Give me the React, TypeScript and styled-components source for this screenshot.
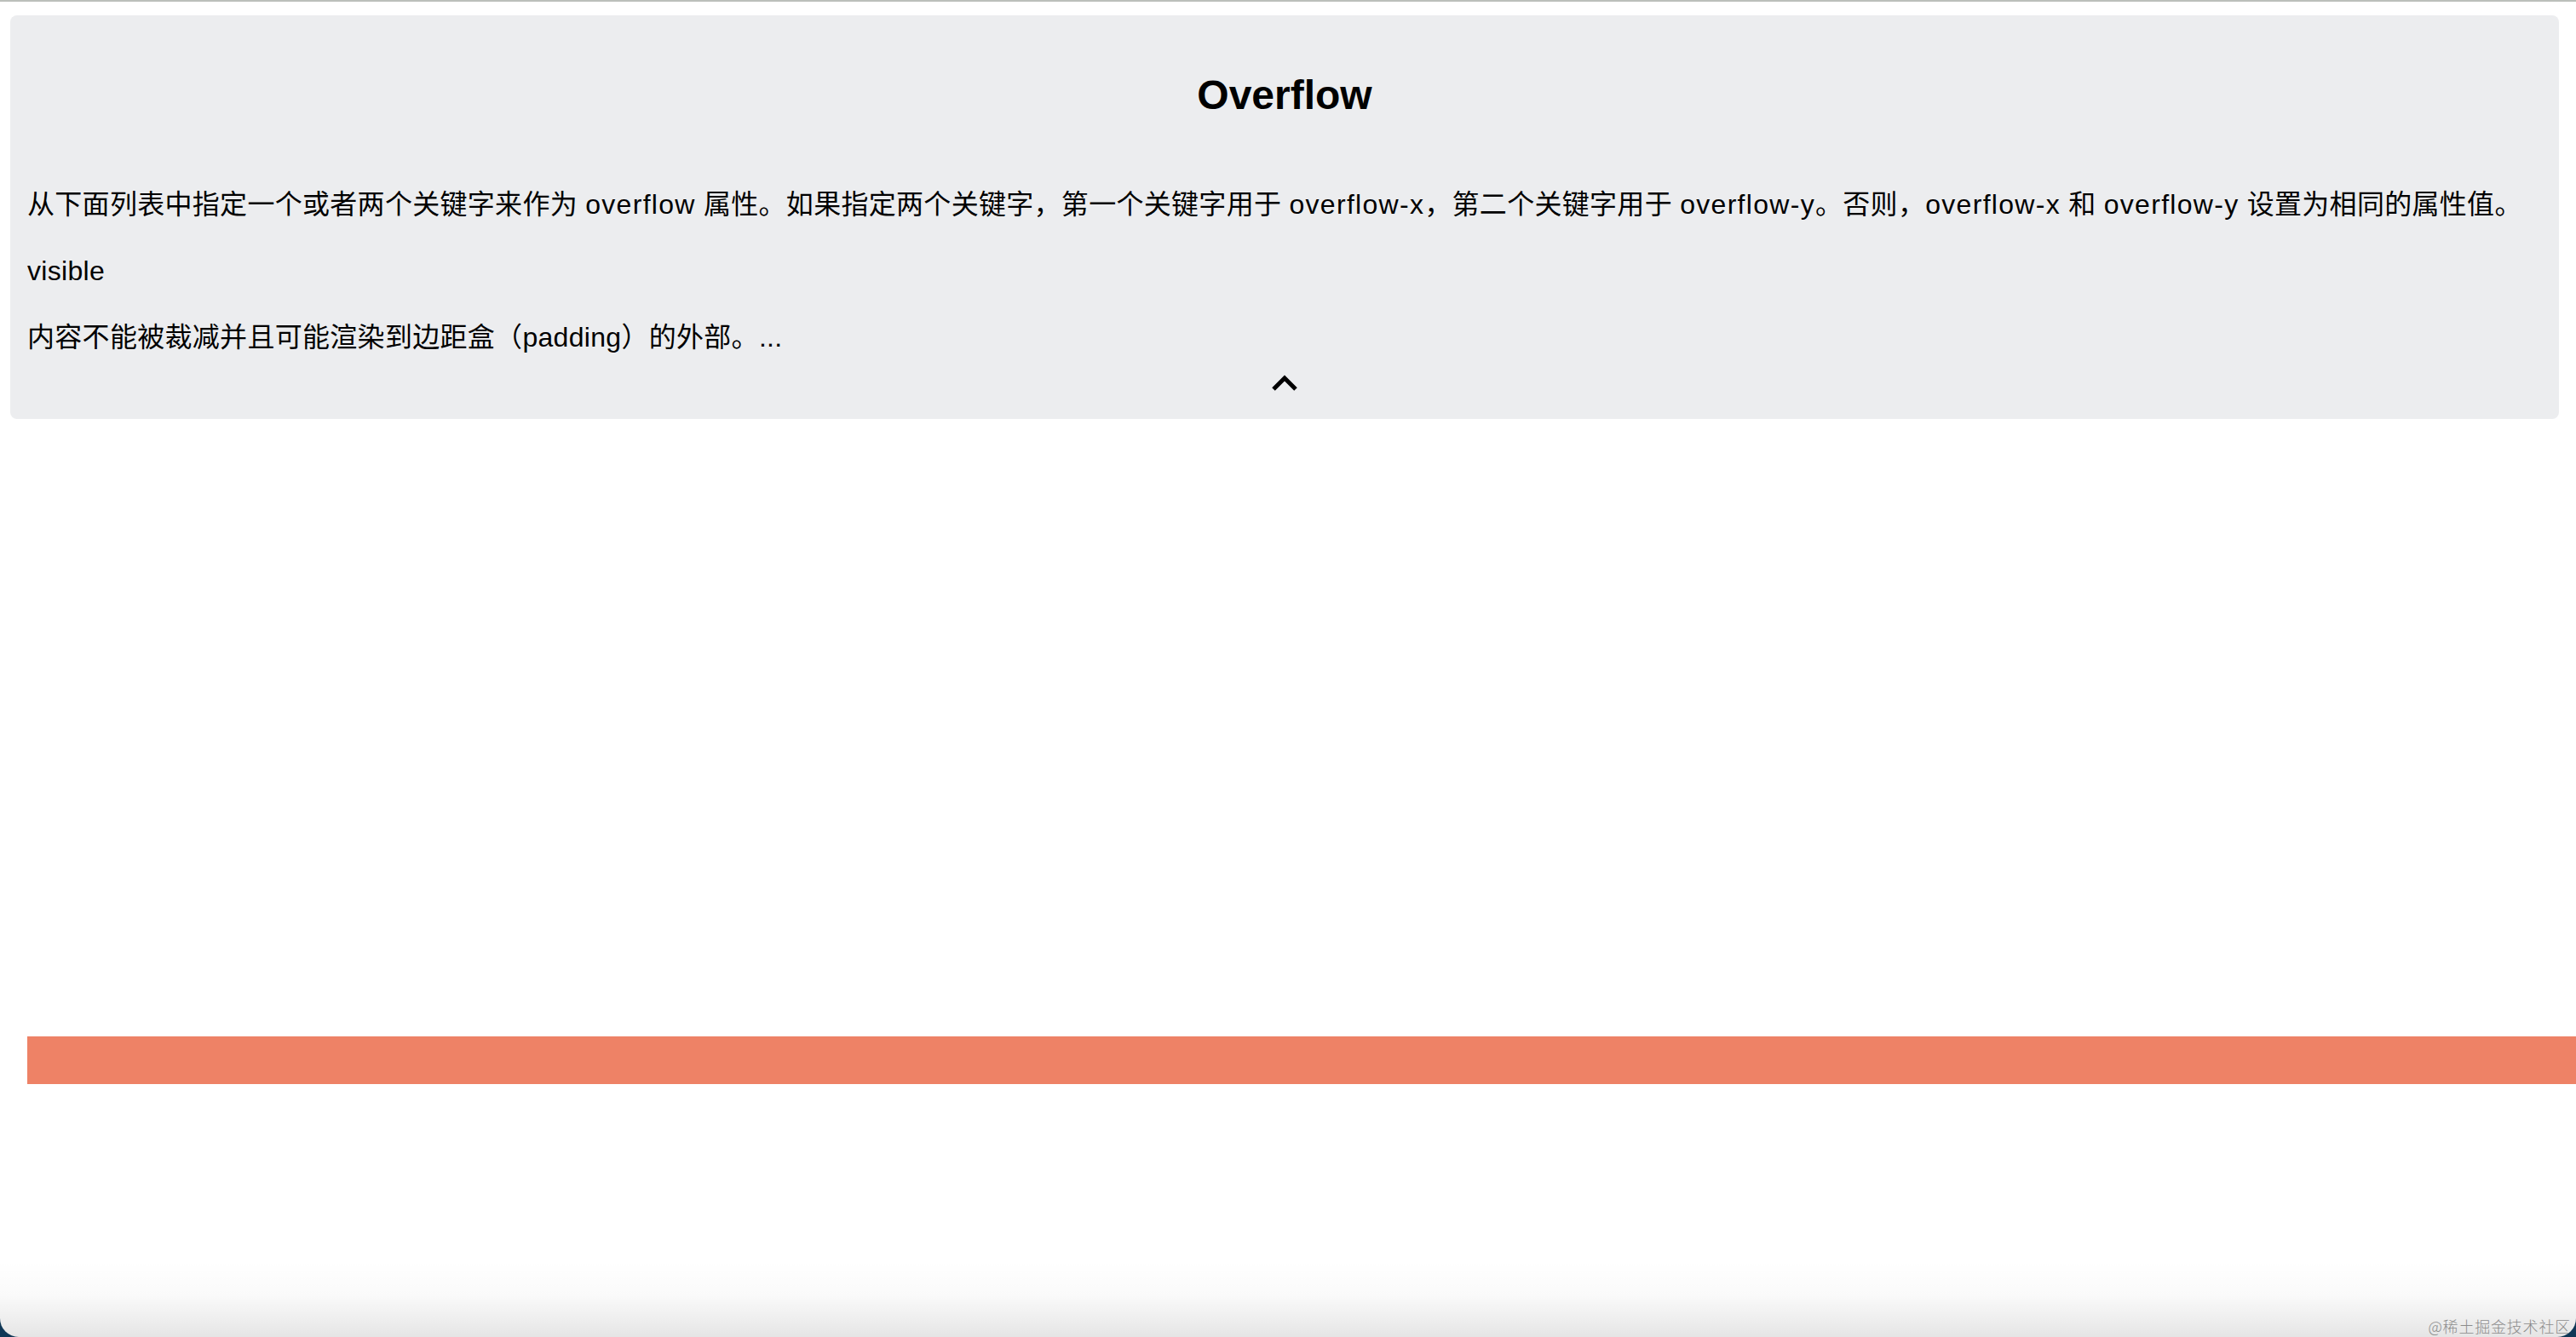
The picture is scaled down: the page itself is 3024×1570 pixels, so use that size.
import React from "react";
import styled, { createGlobalStyle } from "styled-components";

const GlobalStyle = createGlobalStyle`
  html, body {
    margin: 0;
    padding: 0;
    overflow: hidden;
    background: #0f3756;
  }
  body {
    font-family: "Liberation Sans", "Noto Sans CJK SC", sans-serif;
    color: #000;
  }
`;

const Window = styled.div`
  position: relative;
  height: 1570px;
  box-sizing: border-box;
  background: #fff;
  border-top: 2px solid #bcbfbb;
  border-radius: 0 0 22px 22px;
  overflow: hidden;
`;

const Card = styled.section`
  display: flex;
  flex-direction: column;
  margin: 16px 20px 0 12px;
  padding: 66px 20px 27px;
  background: #ecedef;
  border-radius: 8px;
`;

const Title = styled.h2`
  margin: 0 0 77px;
  font-size: 48px;
  line-height: 56px;
  font-weight: 700;
  text-align: center;
`;

const ParagraphList = styled.div`
  display: flex;
  flex-direction: column;
  gap: 32px;
`;

const Paragraph = styled.p`
  margin: 0;
  font-size: 32px;
  line-height: 46px;
  letter-spacing: 0.3px;
  white-space: nowrap;
`;

const Keyword = styled.span`
  letter-spacing: 1.3px;
`;

const ToggleButton = styled.button`
  align-self: center;
  display: flex;
  align-items: center;
  justify-content: center;
  width: 40px;
  height: 30px;
  margin-top: 16px;
  padding: 0;
  border: 0;
  background: transparent;
  cursor: pointer;
`;

const Demo = styled.div`
  margin-top: 725px;
  padding-left: 32px;
`;

const OverflowBar = styled.div`
  width: 3200px;
  height: 56px;
  background: #ee8266;
`;

const BottomShade = styled.div`
  position: absolute;
  left: 0;
  right: 0;
  bottom: 0;
  height: 90px;
  pointer-events: none;
  background: linear-gradient(
    to bottom,
    rgba(0, 0, 0, 0) 0%,
    rgba(0, 0, 0, 0.02) 45%,
    rgba(0, 0, 0, 0.1) 100%
  );
`;

const Watermark = styled.span`
  position: absolute;
  right: 6px;
  bottom: 2px;
  font-family: "Noto Sans CJK SC", sans-serif;
  font-weight: 300;
  font-size: 18px;
  line-height: 22px;
  color: #8c8c8c;
  letter-spacing: 0.8px;
`;

const Chevron = () => (
  <svg width="32" height="20" viewBox="0 0 32 20" aria-hidden="true">
    <polyline
      points="3,17 16,4 29,17"
      fill="none"
      stroke="#000"
      strokeWidth="5"
      strokeLinejoin="miter"
    />
  </svg>
);

export default function App() {
  return (
    <>
      <GlobalStyle />
      <Window>
        <Card>
          <Title>Overflow</Title>
          <ParagraphList>
            <Paragraph>
              从下面列表中指定一个或者两个关键字来作为 <Keyword>overflow</Keyword> 属性。如果指定两个关键字，第一个关键字用于 <Keyword>overflow-x</Keyword>，第二个关键字用于 <Keyword>overflow-y</Keyword>。否则，<Keyword>overflow-x</Keyword> 和 <Keyword>overflow-y</Keyword> 设置为相同的属性值。
            </Paragraph>
            <Paragraph>visible</Paragraph>
            <Paragraph>内容不能被裁减并且可能渲染到边距盒（padding）的外部。...</Paragraph>
          </ParagraphList>
          <ToggleButton aria-label="收起">
            <Chevron />
          </ToggleButton>
        </Card>
        <Demo>
          <OverflowBar />
        </Demo>
        <BottomShade />
        <Watermark>@稀土掘金技术社区</Watermark>
      </Window>
    </>
  );
}
